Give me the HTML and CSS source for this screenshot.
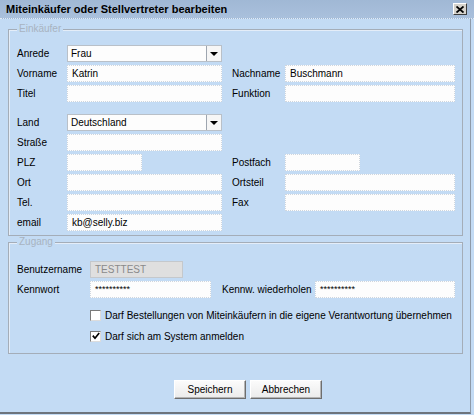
FILE: index.html
```html
<!DOCTYPE html>
<html lang="de">
<head>
    <meta charset="UTF-8">
    <title>Miteinkäufer oder Stellvertreter bearbeiten</title>
    <link rel="stylesheet" href="styles.css">
</head>
<body>
    <div class="titlebar">
        <span class="title">Miteinkäufer oder Stellvertreter bearbeiten</span>
        <span class="close-btn">
            <svg width="8" height="7" viewBox="0 0 8 7"><path d="M0.5 0.5 L7.5 6.5 M7.5 0.5 L0.5 6.5" stroke="#000" stroke-width="1.8"/></svg>
        </span>
    </div>

    <div class="dialog">
        <div class="group buyer">
            <span class="legend">Einkäufer</span>

            <div class="row">
                <label class="lbl">Anrede</label>
                <div class="combo"><span class="combo-value">Frau</span><span class="combo-arrow"></span></div>
            </div>
            <div class="row">
                <label class="lbl">Vorname</label>
                <div class="field">Katrin</div>
                <label class="lbl2">Nachname</label>
                <div class="field wide">Buschmann</div>
            </div>
            <div class="row">
                <label class="lbl">Titel</label>
                <div class="field"></div>
                <label class="lbl2">Funktion</label>
                <div class="field wide"></div>
            </div>
            <div class="row spaced">
                <label class="lbl">Land</label>
                <div class="combo"><span class="combo-value">Deutschland</span><span class="combo-arrow"></span></div>
            </div>
            <div class="row">
                <label class="lbl">Straße</label>
                <div class="field"></div>
            </div>
            <div class="row">
                <label class="lbl">PLZ</label>
                <div class="cell"><div class="field short"></div></div>
                <label class="lbl2">Postfach</label>
                <div class="field short"></div>
            </div>
            <div class="row">
                <label class="lbl">Ort</label>
                <div class="field"></div>
                <label class="lbl2">Ortsteil</label>
                <div class="field wide"></div>
            </div>
            <div class="row">
                <label class="lbl">Tel.</label>
                <div class="field"></div>
                <label class="lbl2">Fax</label>
                <div class="field wide"></div>
            </div>
            <div class="row">
                <label class="lbl">email</label>
                <div class="field">kb@selly.biz</div>
            </div>
        </div>

        <div class="group access">
            <span class="legend">Zugang</span>

            <div class="row">
                <label class="lbl user">Benutzername</label>
                <div class="field readonly">TESTTEST</div>
            </div>
            <div class="row">
                <label class="lbl user">Kennwort</label>
                <div class="field pw">**********</div>
                <label class="lbl2 repeat">Kennw. wiederholen</label>
                <div class="field pw pw-repeat">**********</div>
            </div>

            <div class="checks">
                <div class="check"><span class="box"></span>Darf Bestellungen von Miteinkäufern in die eigene Verantwortung übernehmen</div>
                <div class="check"><span class="box"><svg width="8" height="8" viewBox="0 0 8 8"><path d="M0.8 3.6 L3 6.2 L7.2 1" fill="none" stroke="#000" stroke-width="1.7"/></svg></span>Darf sich am System anmelden</div>
            </div>
        </div>

        <div class="buttons">
            <button class="btn">Speichern</button>
            <button class="btn">Abbrechen</button>
        </div>
    </div>
</body>
</html>
```

FILE: styles.css
```css
* {
    box-sizing: border-box;
    margin: 0;
    padding: 0;
}
body {
    background: #c3dbf4;
    font-family: "Liberation Sans", Arial, sans-serif;
    font-size: 10px;
    color: #000;
    width: 474px;
    height: 415px;
    overflow: hidden;
}
.titlebar {
    height: 19px;
    background: linear-gradient(#a0b8d5, #a9c0dc);
    border-bottom: 1px dotted #e2ebf5;
    display: flex;
    align-items: center;
    justify-content: space-between;
    padding: 0 7px 0 6px;
}
.title {
    font-weight: bold;
    font-size: 11px;
}
.close-btn {
    width: 14px;
    height: 12px;
    background: #d6d3cc;
    border: 1px solid;
    border-color: #fff #3c3c3c #3c3c3c #fff;
    display: flex;
    align-items: center;
    justify-content: center;
}
.dialog {
    width: 471px;
    height: 395px;
    border-right: 1px solid #8e9aa8;
    border-bottom: 2px solid #6c737c;
    padding: 10px 7px 0 8px;
}
.group {
    border: 1px solid #a4adb8;
    box-shadow: inset 1px 1px 0 #e4edf8;
    padding: 0 7px 0 8px;
}
.legend {
    display: block;
    width: max-content;
    margin: -7px 0 0 0;
    padding: 0 2px;
    background: #c3dbf4;
    color: #a8b3c0;
    line-height: 12px;
}
.buyer {
    height: 207px;
}
.buyer .legend {
    margin-bottom: 10px;
}
.access {
    height: 112px;
    margin-top: 6px;
}
.access .legend {
    margin-bottom: 13px;
}
.row {
    display: flex;
    height: 17px;
    margin-bottom: 3px;
}
.row.spaced {
    margin-top: 12px;
}
.lbl {
    width: 50px;
}
.lbl.user {
    width: 73px;
}
.lbl2 {
    width: 53px;
    margin-left: 10px;
}
.lbl2.repeat {
    width: 93px;
    margin-left: 11px;
}
label {
    display: flex;
    align-items: center;
    white-space: nowrap;
}
.cell {
    width: 155px;
}
.field {
    width: 155px;
    height: 17px;
    background: #fdfdfd;
    border: 1px dotted #cfd6de;
    padding: 0 4px;
    display: flex;
    align-items: center;
    white-space: nowrap;
}
.field.wide {
    width: 170px;
}
.field.short {
    width: 75px;
}
.field.readonly {
    width: 93px;
    background: #dfdfdf;
    border: 1px solid #c4c8cc;
    color: #8a8a8a;
}
.field.pw {
    width: 121px;
    font-size: 9px;
    align-items: flex-start;
    padding-top: 2px;
}
.field.pw-repeat {
    width: 140px;
}
.combo {
    width: 155px;
    height: 17px;
    display: flex;
    background: #fdfdfd;
    border: 1px solid #b9c0c8;
}
.combo-value {
    flex: 1;
    padding: 0 3px;
    display: flex;
    align-items: center;
}
.combo-arrow {
    width: 15px;
    border-left: 1px solid #9ea6b0;
    background: #f6f6f6;
    display: flex;
    align-items: center;
    justify-content: center;
}
.combo-arrow::after {
    content: "";
    border-left: 4px solid transparent;
    border-right: 4px solid transparent;
    border-top: 4px solid #000;
}
.checks {
    margin-top: 11px;
    padding-left: 73px;
    display: flex;
    flex-direction: column;
    gap: 9px;
}
.check {
    display: flex;
    align-items: center;
    white-space: nowrap;
    height: 12px;
}
.box {
    width: 11px;
    height: 11px;
    background: #fff;
    border: 1px solid;
    border-color: #7a7a7a #dcdcdc #dcdcdc #7a7a7a;
    margin-right: 4px;
    display: flex;
    align-items: center;
    justify-content: center;
}
.buttons {
    display: flex;
    justify-content: center;
    gap: 4px;
    margin-top: 26px;
    padding-left: 25px;
}
.btn {
    font-family: inherit;
    font-size: 10px;
    width: 72px;
    height: 19px;
    background: linear-gradient(#fbfbfb, #ebebeb);
    border: 1px solid;
    border-color: #fff #6e6e6e #6e6e6e #fff;
    box-shadow: inset -1px -1px 0 #b4b4b4;
    color: #000;
}
```
